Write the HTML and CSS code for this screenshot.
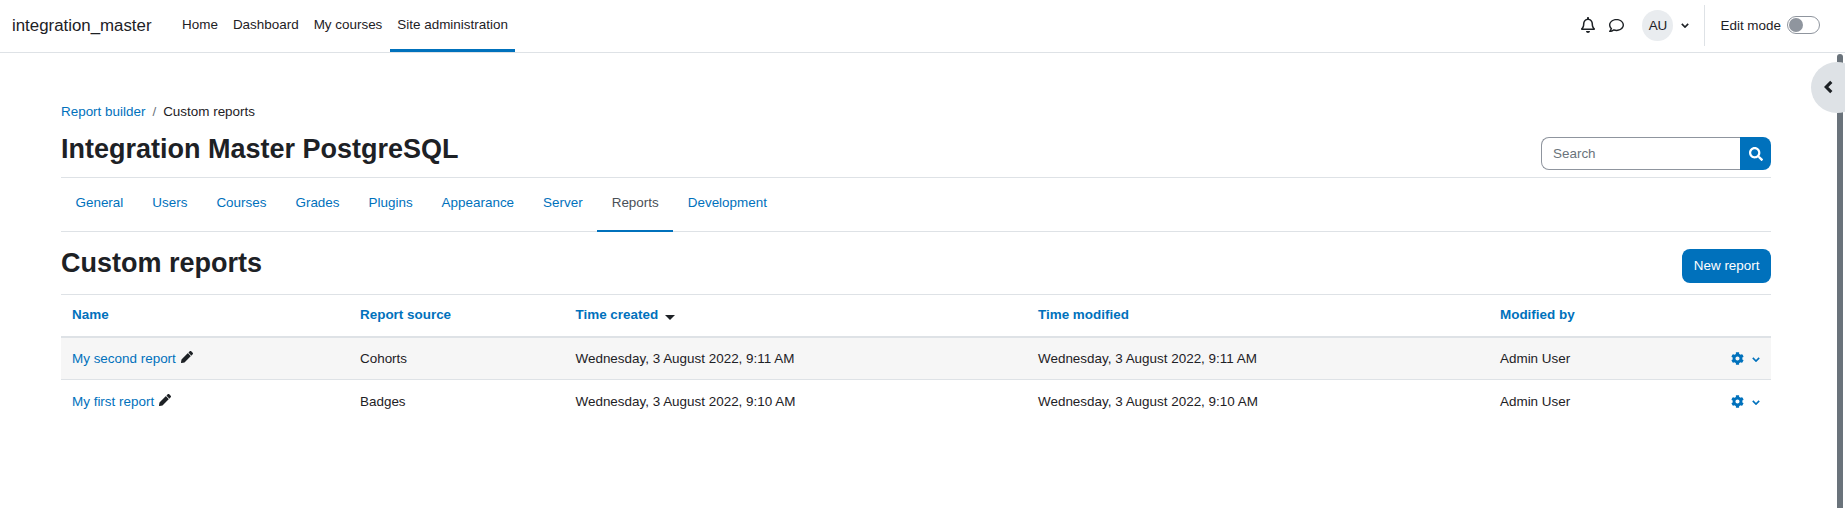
FILE: index.html
```html
<!DOCTYPE html>
<html lang="en">
<head>
<meta charset="utf-8">
<title>Custom reports</title>
<link rel="stylesheet" href="styles.css">
</head>
<body>
<header class="navbar">
  <a class="brand">integration_master</a>
  <nav class="primary">
    <a>Home</a><a>Dashboard</a><a>My courses</a><a class="active">Site administration</a>
  </nav>
  <div class="nav-right">
    <svg class="ic-bell" viewBox="0 0 448 512"><path d="M439.39 362.29c-19.32-20.76-55.47-51.99-55.47-154.29 0-77.7-54.48-139.9-127.94-155.16V32c0-17.67-14.32-32-31.98-32s-31.98 14.33-31.98 32v20.84C118.56 68.1 64.08 130.3 64.08 208c0 102.3-36.15 133.53-55.47 154.29-6 6.45-8.66 14.16-8.61 21.71.11 16.4 12.98 32 32.1 32h383.8c19.12 0 32-15.6 32.1-32 .05-7.55-2.61-15.27-8.61-21.71zM67.53 368c21.22-27.97 44.42-74.33 44.53-159.42 0-.2-.06-.38-.06-.58 0-61.86 50.14-112 112-112s112 50.14 112 112c0 .2-.06.38-.06.58.11 85.1 23.31 131.46 44.53 159.42H67.53zM224 512c35.32 0 63.97-28.65 63.97-64H160.03c0 35.35 28.65 64 63.97 64z"/></svg>
    <svg class="ic-chat" viewBox="0 0 512 512"><path d="M256 32C114.6 32 0 125.1 0 240c0 47.6 19.9 91.2 52.9 126.3C38 405.7 7 439.1 6.5 439.5c-6.6 7-8.4 17.2-4.6 26S14.4 480 24 480c61.5 0 110-25.7 139.1-46.3C192 442.8 223.2 448 256 448c141.4 0 256-93.1 256-208S397.4 32 256 32zm0 368c-26.7 0-53.1-4.1-78.4-12.1l-22.7-7.2-19.5 13.8c-14.3 10.1-33.9 21.4-57.5 29 7.3-12.1 14.4-25.7 19.9-40.2l10.6-28.1-20.6-21.8C69.7 314.1 48 282.2 48 240c0-88.2 93.3-160 208-160s208 71.8 208 160-93.3 160-208 160z"/></svg>
    <span class="avatar">AU</span>
    <svg class="chev-dark" viewBox="0 0 10 6"><path d="M1 1l4 4 4-4"/></svg>
    <span class="divider"></span>
    <span class="edit-label">Edit mode</span>
    <span class="toggle"><span class="knob"></span></span>
  </div>
</header>

<main class="page">
  <ol class="crumbs">
    <li><a>Report builder</a></li>
    <li class="sep">/</li>
    <li>Custom reports</li>
  </ol>
  <div class="head-row">
    <h1>Integration Master PostgreSQL</h1>
    <form class="search">
      <input class="search-input" placeholder="Search">
      <button class="search-btn" type="button"><svg viewBox="0 0 512 512"><path d="M505 442.7L405.3 343c-4.5-4.5-10.6-7-17-7H372c27.6-35.3 44-79.7 44-128C416 93.1 322.9 0 208 0S0 93.1 0 208s93.1 208 208 208c48.3 0 92.7-16.4 128-44v16.3c0 6.4 2.5 12.5 7 17l99.7 99.7c9.4 9.4 24.6 9.4 33.9 0l28.3-28.3c9.4-9.4 9.4-24.6.1-34zM208 336c-70.7 0-128-57.2-128-128 0-70.7 57.2-128 128-128 70.7 0 128 57.2 128 128 0 70.7-57.2 128-128 128z"/></svg></button>
    </form>
  </div>
  <nav class="tabs">
    <a>General</a><a>Users</a><a>Courses</a><a>Grades</a><a>Plugins</a><a>Appearance</a><a>Server</a><a class="active">Reports</a><a>Development</a>
  </nav>
  <div class="sub-row">
    <h2>Custom reports</h2>
    <a class="btn-primary">New report</a>
  </div>
  <table class="reports">
    <colgroup><col class="c1"><col class="c2"><col class="c3"><col class="c4"><col class="c5"><col class="c6"></colgroup>
    <thead>
      <tr>
        <th><a>Name</a></th>
        <th><a>Report source</a></th>
        <th><a>Time created</a><span class="caret"></span></th>
        <th><a>Time modified</a></th>
        <th><a>Modified by</a></th>
        <th></th>
      </tr>
    </thead>
    <tbody>
      <tr class="odd">
        <td><a>My second report</a><svg class="pencil" viewBox="0 0 512 512"><path d="M497.9 142.1l-46.1 46.1c-4.7 4.7-12.3 4.7-17 0l-111-111c-4.7-4.7-4.7-12.3 0-17l46.1-46.1c18.7-18.7 49.1-18.7 67.9 0l60.1 60.1c18.8 18.7 18.8 49.1 0 67.9zM284.2 99.8L21.6 362.4.4 483.9c-2.9 16.4 11.4 30.6 27.8 27.8l121.5-21.3 262.6-262.6c4.7-4.7 4.7-12.3 0-17l-111-111c-4.8-4.7-12.4-4.7-17.1 0z"/></svg></td>
        <td>Cohorts</td>
        <td>Wednesday, 3 August 2022, 9:11 AM</td>
        <td>Wednesday, 3 August 2022, 9:11 AM</td>
        <td>Admin User</td>
        <td class="actions"><svg class="gear" viewBox="0 0 512 512"><path d="M487.4 315.7l-42.6-24.6c4.3-23.2 4.3-47 0-70.2l42.6-24.6c4.9-2.8 7.1-8.6 5.5-14-11.1-35.6-30-67.8-54.7-94.6-3.8-4.1-10-5.1-14.8-2.3L380.8 110c-17.9-15.4-38.5-27.3-60.8-35.1V25.8c0-5.6-3.9-10.5-9.4-11.7-36.7-8.2-74.3-7.8-109.2 0-5.5 1.2-9.4 6.1-9.4 11.7V75c-22.2 7.9-42.8 19.8-60.8 35.1L88.7 85.5c-4.9-2.8-11-1.9-14.8 2.3-24.7 26.7-43.6 58.9-54.7 94.6-1.7 5.4.6 11.2 5.5 14L67.3 221c-4.3 23.2-4.3 47 0 70.2l-42.6 24.6c-4.9 2.8-7.1 8.6-5.5 14 11.1 35.6 30 67.8 54.7 94.6 3.8 4.1 10 5.1 14.8 2.3l42.6-24.6c17.9 15.4 38.5 27.3 60.8 35.1v49.2c0 5.6 3.9 10.5 9.4 11.7 36.7 8.2 74.3 7.8 109.2 0 5.5-1.2 9.4-6.1 9.4-11.7v-49.2c22.2-7.9 42.8-19.8 60.8-35.1l42.6 24.6c4.9 2.8 11 1.9 14.8-2.3 24.7-26.7 43.6-58.9 54.7-94.6 1.5-5.5-.7-11.3-5.6-14.1zM256 336c-44.1 0-80-35.9-80-80s35.9-80 80-80 80 35.9 80 80-35.9 80-80 80z"/></svg><svg class="chev-blue" viewBox="0 0 10 6"><path d="M1 1l4 4 4-4"/></svg></td>
      </tr>
      <tr>
        <td><a>My first report</a><svg class="pencil" viewBox="0 0 512 512"><path d="M497.9 142.1l-46.1 46.1c-4.7 4.7-12.3 4.7-17 0l-111-111c-4.7-4.7-4.7-12.3 0-17l46.1-46.1c18.7-18.7 49.1-18.7 67.9 0l60.1 60.1c18.8 18.7 18.8 49.1 0 67.9zM284.2 99.8L21.6 362.4.4 483.9c-2.9 16.4 11.4 30.6 27.8 27.8l121.5-21.3 262.6-262.6c4.7-4.7 4.7-12.3 0-17l-111-111c-4.8-4.7-12.4-4.7-17.1 0z"/></svg></td>
        <td>Badges</td>
        <td>Wednesday, 3 August 2022, 9:10 AM</td>
        <td>Wednesday, 3 August 2022, 9:10 AM</td>
        <td>Admin User</td>
        <td class="actions"><svg class="gear" viewBox="0 0 512 512"><path d="M487.4 315.7l-42.6-24.6c4.3-23.2 4.3-47 0-70.2l42.6-24.6c4.9-2.8 7.1-8.6 5.5-14-11.1-35.6-30-67.8-54.7-94.6-3.8-4.1-10-5.1-14.8-2.3L380.8 110c-17.9-15.4-38.5-27.3-60.8-35.1V25.8c0-5.6-3.9-10.5-9.4-11.7-36.7-8.2-74.3-7.8-109.2 0-5.5 1.2-9.4 6.1-9.4 11.7V75c-22.2 7.9-42.8 19.8-60.8 35.1L88.7 85.5c-4.9-2.8-11-1.9-14.8 2.3-24.7 26.7-43.6 58.9-54.7 94.6-1.7 5.4.6 11.2 5.5 14L67.3 221c-4.3 23.2-4.3 47 0 70.2l-42.6 24.6c-4.9 2.8-7.1 8.6-5.5 14 11.1 35.6 30 67.8 54.7 94.6 3.8 4.1 10 5.1 14.8 2.3l42.6-24.6c17.9 15.4 38.5 27.3 60.8 35.1v49.2c0 5.6 3.9 10.5 9.4 11.7 36.7 8.2 74.3 7.8 109.2 0 5.5-1.2 9.4-6.1 9.4-11.7v-49.2c22.2-7.9 42.8-19.8 60.8-35.1l42.6 24.6c4.9 2.8 11 1.9 14.8-2.3 24.7-26.7 43.6-58.9 54.7-94.6 1.5-5.5-.7-11.3-5.6-14.1zM256 336c-44.1 0-80-35.9-80-80s35.9-80 80-80 80 35.9 80 80-35.9 80-80 80z"/></svg><svg class="chev-blue" viewBox="0 0 10 6"><path d="M1 1l4 4 4-4"/></svg></td>
      </tr>
    </tbody>
  </table>
</main>

<div class="scrollbar"></div>
<button class="drawer-toggle" type="button"><svg viewBox="0 0 8 12"><path d="M6.5 1.5L2 6l4.5 4.5"/></svg></button>
</body>
</html>
```

FILE: styles.css
```css
* { box-sizing: border-box; }
html, body { height: 100%; }
body {
  margin: 0;
  overflow: hidden;
  position: relative;
  background: #fff;
  color: #1d2125;
  font-family: "Liberation Sans", Arial, sans-serif;
  font-size: 13.45px;
  line-height: 21px;
}
a { color: #0071bc; text-decoration: none; }

.navbar {
  display: flex;
  align-items: stretch;
  height: 53px;
  border-bottom: 1px solid #dee2e6;
  padding-left: 12px;
}
.brand {
  align-self: center;
  color: #1d2125;
  font-size: 16.85px;
  margin-right: 23px;
  margin-bottom: 2px;
}
.primary { display: flex; }
.primary a {
  display: flex;
  align-items: center;
  color: #1d2125;
  padding: 0 7.5px 1px;
  border-bottom: 3px solid transparent;
  height: 52px;
}
.primary a.active { border-bottom-color: #0071bc; }
.nav-right {
  margin-left: auto;
  display: flex;
  align-items: center;
  padding-right: 25px;
  padding-bottom: 2px;
}
.ic-bell { width: 14px; height: 16px; fill: #1d2125; }
.ic-chat { width: 15px; height: 15px; fill: #1d2125; margin-left: 14px; }
.avatar {
  width: 31px;
  height: 31px;
  border-radius: 50%;
  background: #e9ecef;
  display: flex;
  align-items: center;
  justify-content: center;
  margin-left: 18px;
}
.chev-dark { width: 8px; height: 5px; fill: none; stroke: #1d2125; stroke-width: 2; margin-left: 8px; }
.divider { width: 1px; height: 41px; background: #dee2e6; margin-left: 15px; }
.edit-label { margin-left: 15px; }
.toggle {
  width: 33px;
  height: 18px;
  border: 1px solid #8f959e;
  border-radius: 9px;
  margin-left: 6px;
  padding: 1px;
  display: flex;
}
.knob { width: 14px; height: 14px; border-radius: 50%; background: #8f959e; }

.page { padding: 48px 74px 0 61px; }
.crumbs {
  list-style: none;
  display: flex;
  margin: 0;
  padding: 0;
  height: 21px;
}
.crumbs .sep { margin: 0 7px; color: #6a737b; }
.head-row {
  display: flex;
  justify-content: space-between;
  align-items: flex-start;
  height: 56px;
  padding-top: 11px;
  border-bottom: 1px solid #dee2e6;
}
h1 { margin: 0; font-size: 27px; line-height: 32px; font-weight: 700; }
.search { display: flex; height: 33px; width: 230px; margin-top: 4px; }
.search-input {
  flex: 1;
  min-width: 0;
  border: 1px solid #8f959e;
  border-right: 0;
  border-radius: 8px 0 0 8px;
  padding: 0 11px;
  font: inherit;
  outline: 0;
}
.search-input::placeholder { color: #6a737b; }
.search-btn {
  width: 31px;
  border: 0;
  padding: 0;
  background: #0071bc;
  border-radius: 0 8px 8px 0;
  display: flex;
  align-items: center;
  justify-content: center;
}
.search-btn svg { width: 14px; height: 14px; fill: #fff; }

.tabs {
  display: flex;
  height: 54px;
  border-bottom: 1px solid #dee2e6;
}
.tabs a {
  display: flex;
  align-items: center;
  padding: 0 14.5px 4px;
  height: 54px;
  border-bottom: 2px solid transparent;
}
.tabs a.active { color: #495057; border-bottom-color: #0071bc; }

.sub-row {
  display: flex;
  justify-content: space-between;
  align-items: center;
  height: 62px;
  padding-top: 5px;
}
h2 { margin: -6px 0 0; font-size: 27px; line-height: 32px; font-weight: 700; }
.btn-primary {
  display: flex;
  align-items: center;
  height: 34px;
  padding: 0 11.5px;
  background: #0071bc;
  color: #fff;
  border-radius: 8px;
}

.reports { width: 1710px; table-layout: fixed; border-collapse: collapse; }
.c1 { width: 288px; }
.c2 { width: 215.5px; }
.c3 { width: 462.5px; }
.c4 { width: 462px; }
.c5 { width: 200px; }
.c6 { width: 82px; }
.reports th, .reports td { padding: 0 11px; text-align: left; vertical-align: middle; }
.reports th { padding-bottom: 2px; }
.reports thead tr { height: 42px; border-top: 1px solid #dee2e6; border-bottom: 2px solid #dee2e6; }
.reports tbody tr { height: 43px; border-bottom: 1px solid #dee2e6; }
.reports tbody tr:last-child { border-bottom: 0; height: 43px; }
.reports tr.odd { background: #f6f6f6; }
.caret {
  display: inline-block;
  margin-left: 7px;
  border: 5px solid transparent;
  border-top-color: #1d2125;
  border-bottom: 0;
  vertical-align: -1px;
}
.pencil { width: 12px; height: 12px; fill: #1d2125; margin-left: 5px; vertical-align: 0; }
.actions { text-align: right !important; white-space: nowrap; }
.gear { width: 13px; height: 13px; fill: #0071bc; vertical-align: -2px; }
.chev-blue { width: 8px; height: 5px; fill: none; stroke: #0071bc; stroke-width: 2; margin-left: 8px; vertical-align: 1px; }

.scrollbar {
  position: absolute;
  left: 1837px;
  top: 54px;
  width: 6px;
  height: 454px;
  background: #6a737b;
  border-radius: 3px 3px 0 0;
}
.drawer-toggle {
  position: absolute;
  left: 1811px;
  top: 62px;
  width: 52px;
  height: 51px;
  border: 0;
  padding: 0;
  border-radius: 50%;
  background: #dee2e6;
}
.drawer-toggle svg {
  display: block;
  margin: 0 0 2px 13px;
  width: 9px;
  height: 14px;
  fill: none;
  stroke: #1d2125;
  stroke-width: 2.8;
}
```
